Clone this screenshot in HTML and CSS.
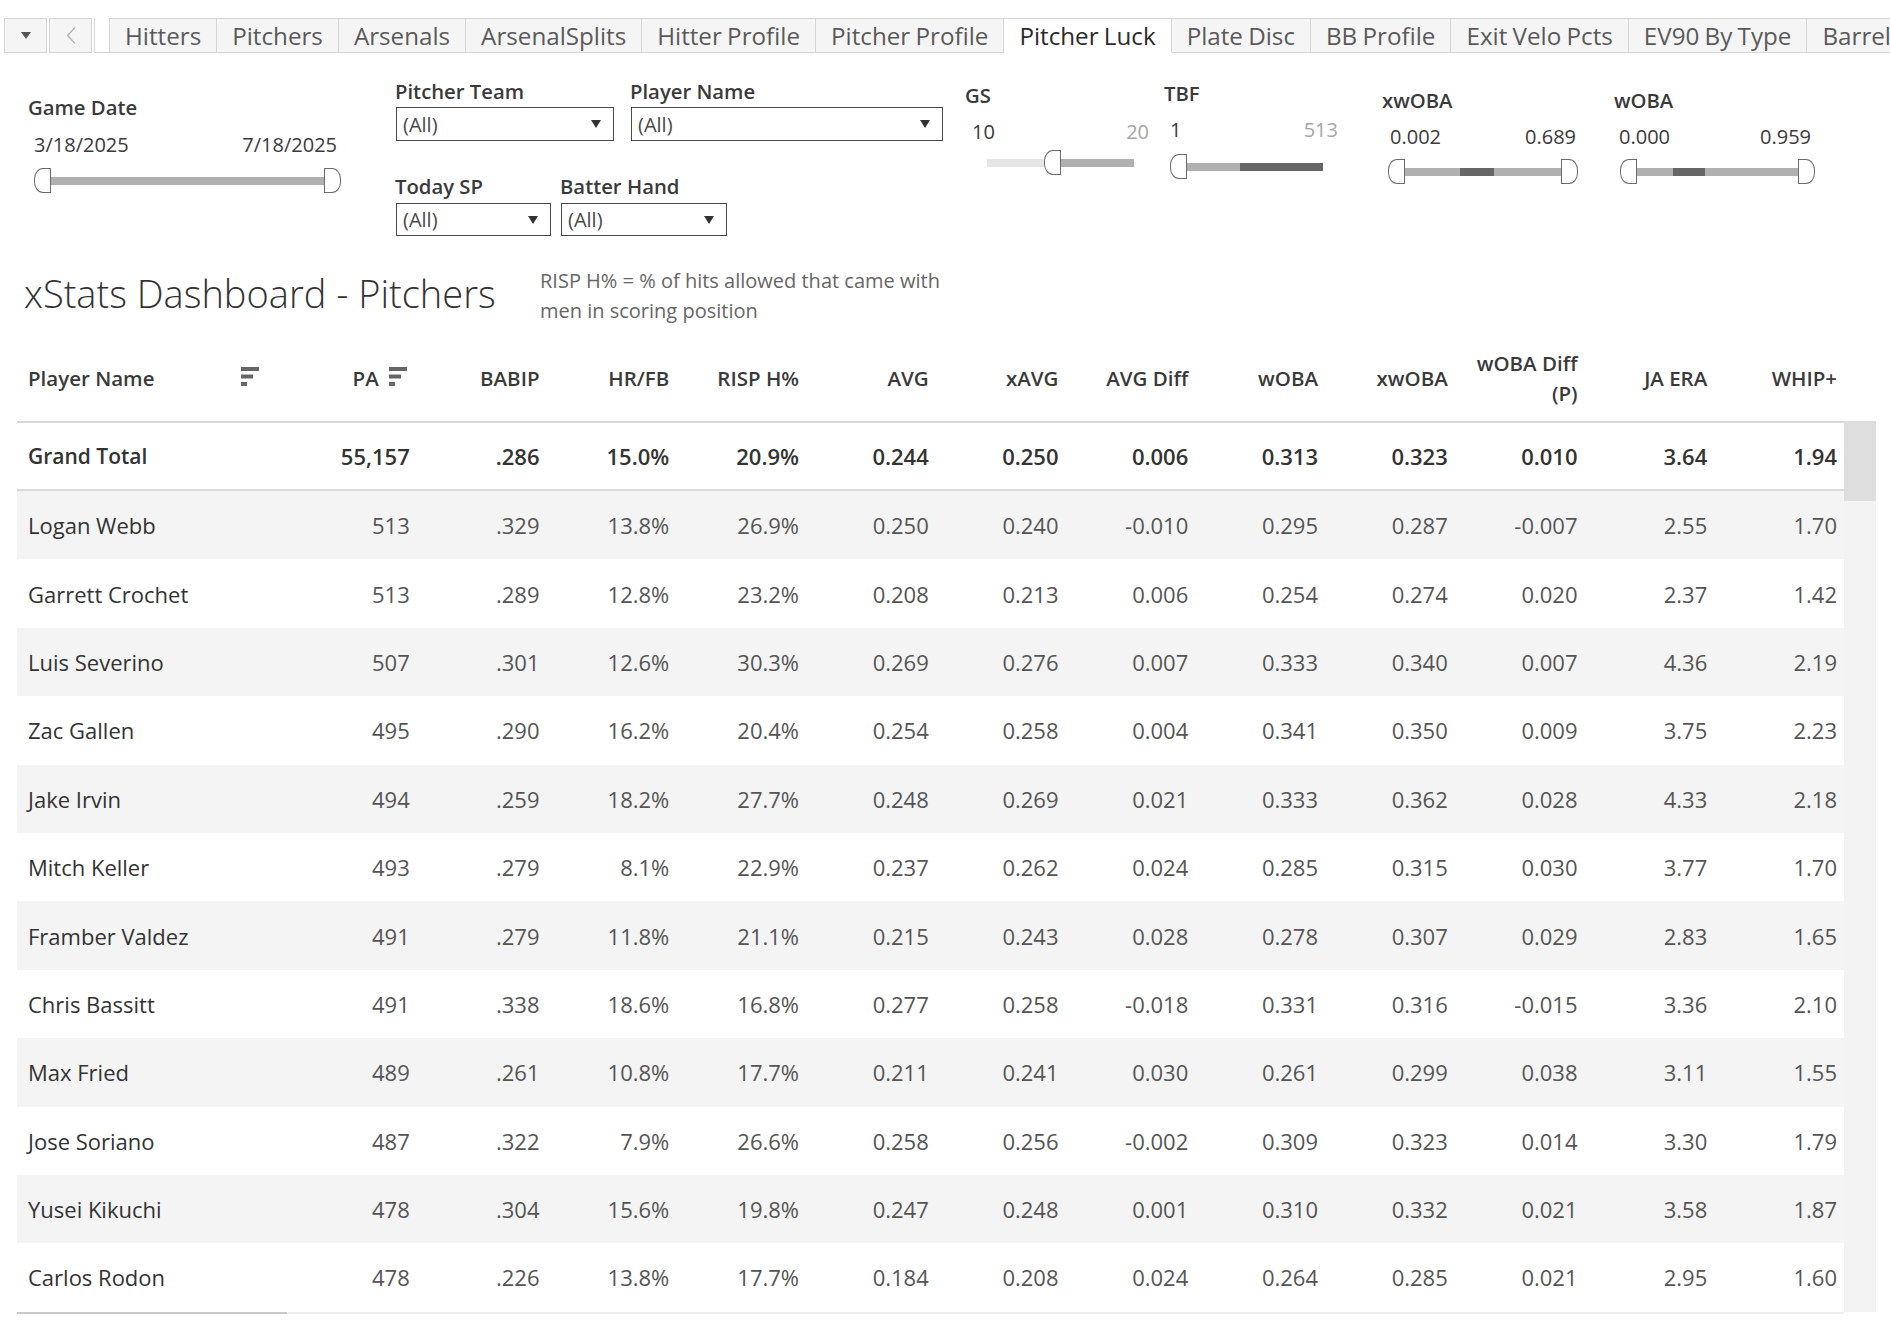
FILE: index.html
```html
<!DOCTYPE html>
<html lang="en">
<head>
<meta charset="utf-8">
<title>xStats Dashboard - Pitchers</title>
<link rel="stylesheet" href="styles.css">
</head>
<body>
<div class="tabbar">
  <div class="tb-btn"><svg width="10" height="7" viewBox="0 0 10 7"><polygon points="0,0 10,0 5,7" fill="#555"/></svg></div>
  <div class="tb-btn"><svg width="10" height="17" viewBox="0 0 10 17"><polyline points="9,0.5 1.5,8.5 9,16.5" fill="none" stroke="#b5b5b5" stroke-width="1.3"/></svg></div>
  <div class="tb-spacer"></div>
  <div class="tab first">Hitters</div>
  <div class="tab">Pitchers</div>
  <div class="tab">Arsenals</div>
  <div class="tab">ArsenalSplits</div>
  <div class="tab">Hitter Profile</div>
  <div class="tab">Pitcher Profile</div>
  <div class="tab active">Pitcher Luck</div>
  <div class="tab">Plate Disc</div>
  <div class="tab">BB Profile</div>
  <div class="tab">Exit Velo Pcts</div>
  <div class="tab">EV90 By Type</div>
  <div class="tab">Barrels</div>
</div>

<div class="filters">
  <div class="fgroup g-date">
    <div class="flabel">Game Date</div>
    <div class="fvals"><span>3/18/2025</span><span>7/18/2025</span></div>
    <div class="slider">
      <span class="handle left"></span><span class="seg mid grow"></span><span class="handle right"></span>
    </div>
  </div>

  <div class="fgroup g-drops">
    <div class="drow row1">
      <div class="dfield f-team">
        <div class="flabel">Pitcher Team</div>
        <div class="dropdown"><span>(All)</span><svg width="10" height="8" viewBox="0 0 10 8"><polygon points="0,0 10,0 5,8" fill="#333"/></svg></div>
      </div>
      <div class="dfield f-player">
        <div class="flabel">Player Name</div>
        <div class="dropdown"><span>(All)</span><svg width="10" height="8" viewBox="0 0 10 8"><polygon points="0,0 10,0 5,8" fill="#333"/></svg></div>
      </div>
    </div>
    <div class="drow row2">
      <div class="dfield f-sp">
        <div class="flabel">Today SP</div>
        <div class="dropdown"><span>(All)</span><svg width="10" height="8" viewBox="0 0 10 8"><polygon points="0,0 10,0 5,8" fill="#333"/></svg></div>
      </div>
      <div class="dfield f-hand">
        <div class="flabel">Batter Hand</div>
        <div class="dropdown"><span>(All)</span><svg width="10" height="8" viewBox="0 0 10 8"><polygon points="0,0 10,0 5,8" fill="#333"/></svg></div>
      </div>
    </div>
  </div>

  <div class="fgroup g-gs">
    <div class="flabel">GS</div>
    <div class="fvals"><span>10</span><span class="dim">20</span></div>
    <div class="slider">
      <span class="seg faint" style="width:57px"></span><span class="handle left"></span><span class="seg mid" style="width:73px"></span>
    </div>
  </div>

  <div class="fgroup g-tbf">
    <div class="flabel">TBF</div>
    <div class="fvals"><span>1</span><span class="dim">513</span></div>
    <div class="slider">
      <span class="handle left"></span><span class="seg mid" style="width:53px"></span><span class="seg dark" style="width:83px"></span>
    </div>
  </div>

  <div class="fgroup g-xwoba">
    <div class="flabel">xwOBA</div>
    <div class="fvals"><span>0.002</span><span>0.689</span></div>
    <div class="slider">
      <span class="handle left"></span><span class="seg mid" style="width:55px"></span><span class="seg dark" style="width:34px"></span><span class="seg mid" style="width:67px"></span><span class="handle right"></span>
    </div>
  </div>

  <div class="fgroup g-woba">
    <div class="flabel">wOBA</div>
    <div class="fvals"><span>0.000</span><span>0.959</span></div>
    <div class="slider">
      <span class="handle left"></span><span class="seg mid" style="width:36px"></span><span class="seg dark" style="width:32px"></span><span class="seg mid" style="width:93px"></span><span class="handle right"></span>
    </div>
  </div>
</div>

<div class="titlerow">
  <h1 class="title">xStats Dashboard - Pitchers</h1>
  <p class="note">RISP H% = % of hits allowed that came with<br>men in scoring position</p>
</div>

<div class="tablewrap">
  <div class="table">
    <div class="row head">
      <div class="c name"><span>Player Name</span><svg class="sort sort-name" width="18" height="19" viewBox="0 0 18 19"><rect x="0" y="0" width="18" height="4"/><rect x="0" y="7.5" width="12" height="4"/><rect x="0" y="15" width="6" height="4"/></svg></div>
      <div class="c"><span>PA</span><svg class="sort sort-pa" width="18" height="19" viewBox="0 0 18 19"><rect x="0" y="0" width="18" height="4"/><rect x="0" y="7.5" width="12" height="4"/><rect x="0" y="15" width="6" height="4"/></svg></div>
      <div class="c">BABIP</div>
      <div class="c">HR/FB</div>
      <div class="c">RISP H%</div>
      <div class="c">AVG</div>
      <div class="c">xAVG</div>
      <div class="c">AVG Diff</div>
      <div class="c">wOBA</div>
      <div class="c">xwOBA</div>
      <div class="c two">wOBA Diff<br>(P)</div>
      <div class="c">JA ERA</div>
      <div class="c">WHIP+</div>
    </div>
    <div class="row total">
      <div class="c name">Grand Total</div><div class="c">55,157</div><div class="c">.286</div><div class="c">15.0%</div><div class="c">20.9%</div><div class="c">0.244</div><div class="c">0.250</div><div class="c">0.006</div><div class="c">0.313</div><div class="c">0.323</div><div class="c">0.010</div><div class="c">3.64</div><div class="c">1.94</div>
    </div>
    <div class="rows">
      <div class="row"><div class="c name">Logan Webb</div><div class="c">513</div><div class="c">.329</div><div class="c">13.8%</div><div class="c">26.9%</div><div class="c">0.250</div><div class="c">0.240</div><div class="c">-0.010</div><div class="c">0.295</div><div class="c">0.287</div><div class="c">-0.007</div><div class="c">2.55</div><div class="c">1.70</div></div>
      <div class="row"><div class="c name">Garrett Crochet</div><div class="c">513</div><div class="c">.289</div><div class="c">12.8%</div><div class="c">23.2%</div><div class="c">0.208</div><div class="c">0.213</div><div class="c">0.006</div><div class="c">0.254</div><div class="c">0.274</div><div class="c">0.020</div><div class="c">2.37</div><div class="c">1.42</div></div>
      <div class="row"><div class="c name">Luis Severino</div><div class="c">507</div><div class="c">.301</div><div class="c">12.6%</div><div class="c">30.3%</div><div class="c">0.269</div><div class="c">0.276</div><div class="c">0.007</div><div class="c">0.333</div><div class="c">0.340</div><div class="c">0.007</div><div class="c">4.36</div><div class="c">2.19</div></div>
      <div class="row"><div class="c name">Zac Gallen</div><div class="c">495</div><div class="c">.290</div><div class="c">16.2%</div><div class="c">20.4%</div><div class="c">0.254</div><div class="c">0.258</div><div class="c">0.004</div><div class="c">0.341</div><div class="c">0.350</div><div class="c">0.009</div><div class="c">3.75</div><div class="c">2.23</div></div>
      <div class="row"><div class="c name">Jake Irvin</div><div class="c">494</div><div class="c">.259</div><div class="c">18.2%</div><div class="c">27.7%</div><div class="c">0.248</div><div class="c">0.269</div><div class="c">0.021</div><div class="c">0.333</div><div class="c">0.362</div><div class="c">0.028</div><div class="c">4.33</div><div class="c">2.18</div></div>
      <div class="row"><div class="c name">Mitch Keller</div><div class="c">493</div><div class="c">.279</div><div class="c">8.1%</div><div class="c">22.9%</div><div class="c">0.237</div><div class="c">0.262</div><div class="c">0.024</div><div class="c">0.285</div><div class="c">0.315</div><div class="c">0.030</div><div class="c">3.77</div><div class="c">1.70</div></div>
      <div class="row"><div class="c name">Framber Valdez</div><div class="c">491</div><div class="c">.279</div><div class="c">11.8%</div><div class="c">21.1%</div><div class="c">0.215</div><div class="c">0.243</div><div class="c">0.028</div><div class="c">0.278</div><div class="c">0.307</div><div class="c">0.029</div><div class="c">2.83</div><div class="c">1.65</div></div>
      <div class="row"><div class="c name">Chris Bassitt</div><div class="c">491</div><div class="c">.338</div><div class="c">18.6%</div><div class="c">16.8%</div><div class="c">0.277</div><div class="c">0.258</div><div class="c">-0.018</div><div class="c">0.331</div><div class="c">0.316</div><div class="c">-0.015</div><div class="c">3.36</div><div class="c">2.10</div></div>
      <div class="row"><div class="c name">Max Fried</div><div class="c">489</div><div class="c">.261</div><div class="c">10.8%</div><div class="c">17.7%</div><div class="c">0.211</div><div class="c">0.241</div><div class="c">0.030</div><div class="c">0.261</div><div class="c">0.299</div><div class="c">0.038</div><div class="c">3.11</div><div class="c">1.55</div></div>
      <div class="row"><div class="c name">Jose Soriano</div><div class="c">487</div><div class="c">.322</div><div class="c">7.9%</div><div class="c">26.6%</div><div class="c">0.258</div><div class="c">0.256</div><div class="c">-0.002</div><div class="c">0.309</div><div class="c">0.323</div><div class="c">0.014</div><div class="c">3.30</div><div class="c">1.79</div></div>
      <div class="row"><div class="c name">Yusei Kikuchi</div><div class="c">478</div><div class="c">.304</div><div class="c">15.6%</div><div class="c">19.8%</div><div class="c">0.247</div><div class="c">0.248</div><div class="c">0.001</div><div class="c">0.310</div><div class="c">0.332</div><div class="c">0.021</div><div class="c">3.58</div><div class="c">1.87</div></div>
      <div class="row"><div class="c name">Carlos Rodon</div><div class="c">478</div><div class="c">.226</div><div class="c">13.8%</div><div class="c">17.7%</div><div class="c">0.184</div><div class="c">0.208</div><div class="c">0.024</div><div class="c">0.264</div><div class="c">0.285</div><div class="c">0.021</div><div class="c">2.95</div><div class="c">1.60</div></div>
    </div>
    <div class="tfoot"></div>
  </div>
  <div class="scrollbar"><div class="thumb"></div></div>
</div>
</body>
</html>
```

FILE: styles.css
```css
html, body {
  margin: 0;
  padding: 0;
  background: #fff;
}
body {
  width: 1890px;
  height: 1324px;
  overflow: hidden;
  font-family: "Open Sans", "Noto Sans", "Liberation Sans", sans-serif;
  color: #333;
}

/* ---------- tab bar ---------- */
.tabbar {
  display: flex;
  margin-top: 18px;
  padding-left: 4px;
  height: 35px;
  white-space: nowrap;
  overflow: hidden;
}
.tb-btn {
  box-sizing: border-box;
  flex: 0 0 auto;
  width: 43px;
  height: 35px;
  margin-right: 2px;
  border: 1px solid #d6d6d6;
  background: #f5f5f5;
  display: flex;
  align-items: center;
  justify-content: center;
}
.tb-spacer {
  box-sizing: border-box;
  flex: 0 0 auto;
  width: 15px;
  height: 35px;
  border-left: 1px solid #d6d6d6;
  border-bottom: 1px solid #d6d6d6;
}
.tab {
  box-sizing: border-box;
  flex: 0 0 auto;
  height: 35px;
  padding: 0 15px;
  border: 1px solid #d6d6d6;
  border-left: none;
  background: #f5f5f5;
  font-size: 24.2px;
  word-spacing: -1px;
  line-height: 33px;
  color: #5a5a5a;
}
.tab.first {
  border-left: 1px solid #d6d6d6;
}
.tab.active {
  background: #fff;
  border-bottom-color: #fff;
  color: #2b2b2b;
}

/* ---------- filters ---------- */
.filters {
  display: flex;
  align-items: flex-start;
}
.fgroup {
  flex: 0 0 auto;
  box-sizing: border-box;
}
.flabel {
  font-size: 20.3px;
  line-height: 24px;
  font-weight: 600;
  color: #3a3a3a;
  white-space: nowrap;
}
.fvals {
  display: flex;
  justify-content: space-between;
  font-size: 20px;
  line-height: 24px;
  color: #3a3a3a;
}
.fvals .dim {
  color: #a6a6a6;
}
.slider {
  display: flex;
  align-items: center;
  height: 25px;
}
.handle {
  box-sizing: border-box;
  flex: 0 0 17px;
  width: 17px;
  height: 25px;
  border: 1px solid #6b6b6b;
  background: #fff;
}
.handle.left {
  border-radius: 9px 0 0 9px / 11px 0 0 11px;
}
.handle.right {
  border-radius: 0 9px 9px 0 / 0 11px 11px 0;
}
.seg {
  flex: 0 0 auto;
  height: 8px;
}
.seg.grow { flex: 1 1 auto; }
.seg.faint { background: #e5e5e5; }
.seg.mid { background: #b0b0b0; }
.seg.dark { background: #666; }

.g-date {
  margin-left: 28px;
  width: 313px;
  padding-top: 42px;
}
.g-date .fvals {
  margin-top: 14px;
  padding: 0 4px 0 6px;
}
.g-date .slider {
  margin-top: 11px;
  margin-left: 6px;
}

.g-drops {
  margin-left: 54px;
  width: 548px;
  padding-top: 26px;
}
.drow {
  display: flex;
}
.row1 { gap: 16px; }
.row2 { gap: 9px; margin-top: 33px; }
.f-team { width: 219px; }
.f-player { width: 313px; }
.f-sp { width: 156px; }
.f-hand { width: 167px; }
.dropdown {
  box-sizing: border-box;
  display: flex;
  align-items: center;
  justify-content: space-between;
  margin-left: 1px;
  height: 34px;
  margin-top: 4px;
  padding: 0 12px 0 6px;
  border: 1px solid #4a4a4a;
  font-size: 20px;
  color: #4a4a4a;
}
.row2 .dropdown {
  height: 33px;
  margin-top: 5px;
}

.g-gs {
  margin-left: 22px;
  width: 184px;
  padding-top: 30px;
}
.g-gs .fvals { margin-top: 13px; padding-left: 7px; }
.g-gs .slider { margin-top: 6px; margin-left: 22px; }

.g-tbf {
  margin-left: 15px;
  width: 174px;
  padding-top: 28px;
}
.g-tbf .fvals { margin-top: 13px; padding-left: 6px; }
.g-tbf .slider { margin-top: 12px; margin-left: 6px; }

.g-xwoba {
  margin-left: 44px;
  width: 196px;
  padding-top: 35px;
}
.g-xwoba .fvals { margin-top: 13px; padding: 0 2px 0 8px; }
.g-xwoba .slider { margin-top: 10px; margin-left: 6px; }

.g-woba {
  margin-left: 36px;
  width: 201px;
  padding-top: 35px;
}
.g-woba .fvals { margin-top: 13px; padding: 0 4px 0 5px; }
.g-woba .slider { margin-top: 10px; margin-left: 6px; }

/* ---------- title ---------- */
.titlerow {
  display: flex;
  align-items: flex-start;
  margin-top: 30px;
  height: 60px;
}
.title {
  flex: 0 0 540px;
  box-sizing: border-box;
  margin: 5px 0 0 0;
  padding-left: 24px;
  font-size: 38px;
  line-height: 44px;
  font-weight: 300;
  color: #333;
  white-space: nowrap;
}
.note {
  margin: 0;
  font-size: 20px;
  line-height: 30px;
  color: #666;
  white-space: nowrap;
}

/* ---------- table ---------- */
.tablewrap {
  display: flex;
  margin-top: 8px;
  margin-left: 17px;
}
.table {
  width: 1827px;
  flex: 0 0 1827px;
}
.row {
  display: grid;
  grid-template-columns: 270px repeat(12, 1fr);
  height: 68.4px;
  font-size: 22px;
  color: #555;
}
.c {
  display: flex;
  align-items: center;
  justify-content: flex-end;
  padding-right: 7px;
  white-space: nowrap;
}
.c.name {
  justify-content: flex-start;
  padding-left: 11px;
  color: #333;
}
.row.head {
  height: 87px;
  border-bottom: 2px solid #d8d8d8;
  font-size: 20.5px;
  font-weight: 600;
  color: #3a3a3a;
}
.row.head .c.name {
  color: #3a3a3a;
}
.row.head .c.two {
  text-align: right;
  line-height: 30px;
}
.sort {
  fill: #666;
  flex: 0 0 auto;
}
.sort-name {
  margin-left: auto;
  margin-right: 21px;
  margin-top: -2px;
}
.sort-pa {
  margin-left: 10px;
  margin-right: 3px;
  margin-top: -2px;
}
.row.total {
  height: 66px;
  border-bottom: 2px solid #dcdcdc;
  font-weight: 600;
  color: #333;
}
.row.total .c.name {
  font-size: 21px;
}
.rows .row:nth-child(odd) {
  background: #f4f4f4;
}
.tfoot {
  height: 2px;
  background: linear-gradient(to right, #c9c9c9 270px, #eeeeee 270px);
}
.scrollbar {
  flex: 0 0 32px;
  margin-top: 87px;
  height: 891px;
  background: #f3f3f3;
}
.thumb {
  height: 80px;
  background: #dedede;
}
```
